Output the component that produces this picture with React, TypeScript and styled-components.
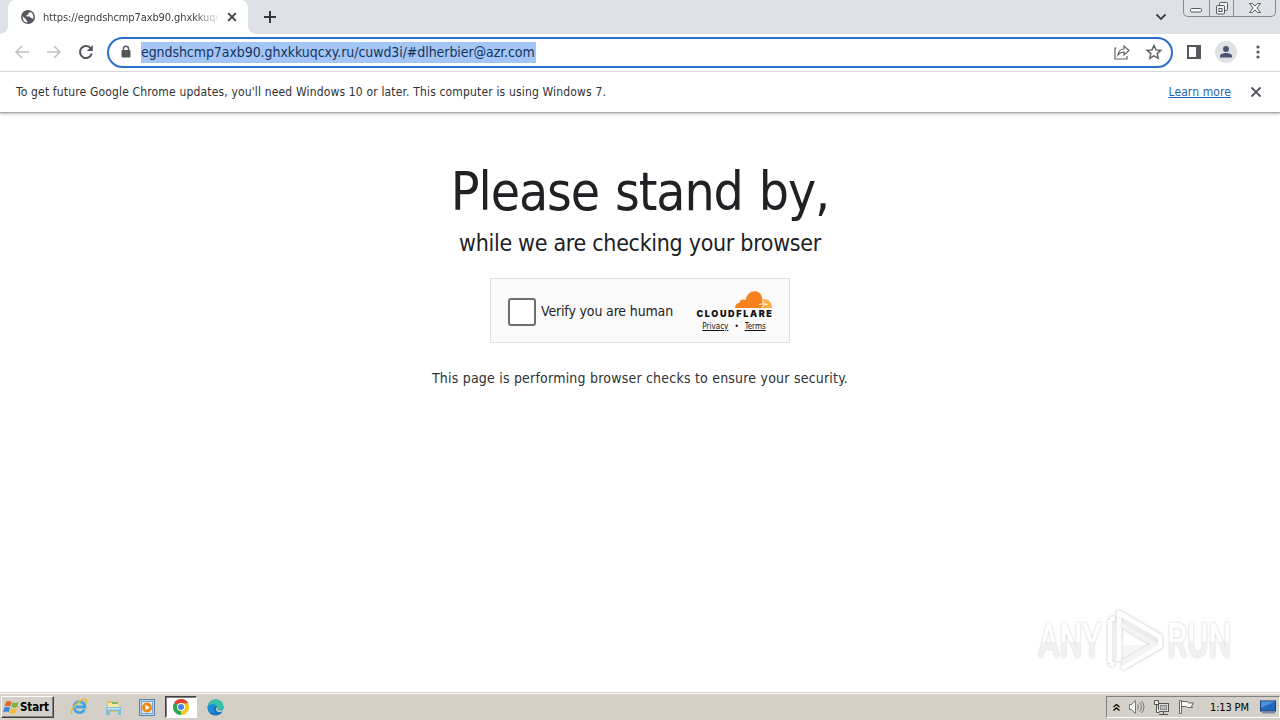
import React from 'react';
import styled, { createGlobalStyle } from 'styled-components';

const Global = createGlobalStyle`
  * { box-sizing: border-box; }
  body { margin: 0; background: #fff; }
  svg { display: block; flex: none; }
`;

const Screen = styled.div`
  width: 1280px;
  height: 720px;
  overflow: hidden;
  display: flex;
  flex-direction: column;
  background: #fff;
  color: #202124;
  font-family: 'DejaVu Sans Condensed', 'DejaVu Sans', sans-serif;
  font-stretch: condensed;
`;

const Label = styled.span<{ $size: number; $spacing?: number; $color?: string }>`
  font-size: ${p => p.$size}px;
  letter-spacing: ${p => p.$spacing ?? 0}px;
  color: ${p => p.$color ?? '#303134'};
  white-space: nowrap;
`;

const TabStrip = styled.div`
  height: 34px;
  flex: none;
  display: flex;
  background: #dee1e6;
  padding-left: 8px;
`;

const Tab = styled.div`
  position: relative;
  width: 240px;
  height: 34px;
  display: flex;
  align-items: center;
  padding: 0 10px 0 13px;
  background: #fff;
  border-radius: 8px 8px 0 0;
  &::before, &::after {
    content: '';
    position: absolute;
    bottom: 0;
    width: 8px;
    height: 8px;
  }
  &::before { left: -8px; background: radial-gradient(circle at 0 0, #dee1e6 7.5px, #fff 8px); }
  &::after { right: -8px; background: radial-gradient(circle at 100% 0, #dee1e6 7.5px, #fff 8px); }
`;

const TabTitle = styled.div`
  width: 176px;
  margin: 2px 8px 0 8px;
  overflow: hidden;
  line-height: 16px;
  display: flex;
  mask-image: linear-gradient(90deg, #000 150px, transparent 178px);
`;

const NewTab = styled.div`
  margin: 10px 0 0 15px;
`;

const StripEnd = styled.div`
  margin-left: auto;
  display: flex;
  padding-right: 4px;
`;

const TabSearch = styled.div`
  padding: 12px 16px 0 0;
`;

const WindowButtons = styled.div`
  display: flex;
  width: 93px;
  height: 17px;
  border: 1px solid #878a90;
  border-top: 0;
  border-radius: 0 0 5px 5px;
  background: #dee1e6;
`;

const WindowButton = styled.div<{ $width: number }>`
  width: ${p => p.$width}px;
  display: flex;
  justify-content: center;
  & + & { border-left: 1px solid #878a90; }
`;

const Toolbar = styled.div`
  height: 38px;
  flex: none;
  display: flex;
  align-items: center;
  padding: 0 12px 1px 12px;
  border-bottom: 1px solid #dcdde0;
`;

const NavButtons = styled.div`
  display: flex;
  gap: 12px;
  width: 95px;
`;

const AddressBar = styled.div`
  width: 1066px;
  height: 31px;
  display: flex;
  align-items: center;
  border: 2px solid #2a6fce;
  border-radius: 16px;
  padding: 0 8px 0 11px;
`;

const Selection = styled.div`
  display: flex;
  align-items: center;
  height: 21px;
  margin-left: 9px;
  width: 395px;
  background: #a3c6f5;
`;

const BarActions = styled.div`
  margin-left: auto;
  display: flex;
  gap: 14px;
`;

const ToolbarActions = styled.div`
  display: flex;
  align-items: center;
  margin-left: 11px;
  gap: 11px;
`;

const InfoBar = styled.div`
  height: 41px;
  flex: none;
  display: flex;
  align-items: center;
  padding: 0 17px 0 16px;
  border-bottom: 1px solid #aaa;
  box-shadow: 0 1px 3px #bbb;
`;

const LearnMore = styled.a`
  margin: 0 18px 0 auto;
  color: #2463ba;
  text-decoration: underline;
  font-size: 12px;
  letter-spacing: 0.1px;
`;

const Page = styled.main`
  position: relative;
  flex: 1;
  display: flex;
  flex-direction: column;
  align-items: center;
  padding-top: 45px;
`;

const Heading = styled.h1`
  margin: 0;
  font-size: 53px;
  font-weight: 400;
  line-height: 68px;
  letter-spacing: -1.1px;
  word-spacing: 2px;
  white-space: nowrap;
`;

const Subheading = styled.h2`
  margin: 0;
  font-size: 23px;
  font-weight: 400;
  line-height: 35px;
  letter-spacing: -0.3px;
  white-space: nowrap;
`;

const Challenge = styled.div`
  width: 300px;
  height: 65px;
  margin: 17px 0 27px;
  border: 1px solid #e0e0e0;
  background: #fafafa;
  display: flex;
  align-items: center;
  padding: 0 16px 0 17px;
`;

const Checkbox = styled.div`
  width: 28px;
  height: 28px;
  border: 2px solid #6d6d6d;
  border-radius: 3px;
  background: #fff;
  margin: 2px 5px 0 0;
`;

const Brand = styled.div`
  margin-left: auto;
  width: 78px;
  padding-top: 2px;
  display: flex;
  flex-direction: column;
  align-items: center;
`;

const CloudRow = styled.div`
  align-self: flex-end;
  padding-right: 1px;
`;

const Wordmark = styled.div`
  font-family: Inter, sans-serif;
  font-stretch: normal;
  font-weight: 900;
  font-size: 9px;
  line-height: 10px;
  letter-spacing: 1.65px;
  margin-right: -2px;
  color: #111;
`;

const Terms = styled.div`
  display: flex;
  gap: 6px;
  align-items: center;
  margin-top: 2px;
  line-height: 11px;
  font-size: 8px;
  color: #111;
  u { text-underline-offset: 1px; }
`;

const Watermark = styled.div`
  position: absolute;
  left: 1038px;
  top: 495px;
  display: flex;
  align-items: center;
  gap: 3px;
`;

const WordSlot = styled.div`
  width: 65px;
  display: flex;
`;

const WatermarkWord = styled.span`
  flex: none;
  font-family: Roboto, sans-serif;
  font-stretch: normal;
  font-size: 49px;
  font-weight: 500;
  line-height: 64px;
  white-space: nowrap;
  color: transparent;
  background: linear-gradient(#fff 50%, #f1f1f1 52%);
  background-clip: text;
  filter: drop-shadow(0 0 1.5px #ccc);
  transform: scaleX(0.66);
  transform-origin: 0 50%;
`;

const Taskbar = styled.footer`
  height: 28px;
  flex: none;
  display: flex;
  align-items: center;
  background: #d4d0c8;
  border-top: 1px solid #d4d0c8;
  box-shadow: inset 0 1px #fff;
  padding: 1px 0 0 1px;
`;

const StartButton = styled.div`
  width: 53px;
  height: 22px;
  display: flex;
  align-items: center;
  gap: 0;
  padding-left: 1px;
  border: 1px solid;
  border-color: #fff #404040 #404040 #fff;
  box-shadow: inset -1px -1px #808080;
  font-size: 11.5px;
  font-weight: 700;
  letter-spacing: -0.1px;
  color: #000;
`;

const Launchers = styled.div`
  display: flex;
  margin-left: 9px;
`;

const Launcher = styled.div<{ $active?: boolean }>`
  width: 32px;
  height: 22px;
  margin-right: 2px;
  display: flex;
  align-items: center;
  justify-content: center;
  ${p => p.$active && `
    background: #fff;
    border: 1px solid;
    border-color: #404040 #fff #fff #404040;
    box-shadow: inset 1px 1px #808080;
  `}
`;

const Tray = styled.div`
  margin-left: auto;
  width: 174px;
  height: 22px;
  display: flex;
  align-items: center;
  padding-left: 6px;
  border: 1px solid;
  border-color: #808080 #fff #fff #808080;
`;

const TrayIcons = styled.div`
  display: flex;
  align-items: center;
  gap: 8px;
  width: 97px;
`;

const ShowDesktop = styled.div`
  margin-left: auto;
  padding-right: 3px;
`;

const Stroke = ({ d, size = 16, color = '#5f6368', width = 1.8 }: { d: string; size?: number; color?: string; width?: number }) => (
  <svg width={size} height={size} viewBox={`0 0 ${size} ${size}`} fill="none" stroke={color} strokeWidth={width}>
    <path d={d} />
  </svg>
);

const GlobeIcon = () => (
  <svg width="14" height="14" viewBox="0 0 14 14">
    <circle cx="7" cy="7" r="7" fill="#54585d" />
    <path d="M1.6 6.2 5 9.2v1l1.4 1.2v1.2C3.4 12.5 1.3 9.6 1.6 6.2ZM8.6 1.7c.2 1-.2 1.6-1.3 1.8l-.2 1.2-1.5.4v1.3h3.2l1 1.6h1.3l1 1.2c1.1-3-.2-6.5-3.500-7.500Z" fill="#fff" />
  </svg>
);

const ReloadIcon = () => (
  <svg width="20" height="20" viewBox="0 0 20 20">
    <path d="M14.900 6.500A6 6 0 1 0 15.800 11.600" fill="none" stroke="#54585d" strokeWidth="2" />
    <path d="M16.800 3v6h-6Z" fill="#54585d" />
  </svg>
);

const LockIcon = () => (
  <svg width="12" height="14" viewBox="0 0 12 14">
    <rect x="1.500" y="5" width="9" height="7.500" rx="1" fill="#54585d" />
    <path d="M3.500 5.500V3.800a2.500 2.500 0 0 1 5 0v1.700" fill="none" stroke="#54585d" strokeWidth="1.400" />
  </svg>
);

const CloudLogo = () => (
  <svg width="37" height="18" viewBox="0 0 37 18">
    <path d="M25 17 28 8.500C33 7.500 36.500 11 37 17Z" fill="#fbad41" />
    <path d="M0 17c0-3 1.500-5 4.500-5 0-3 3-4.500 6-3C12 3 15.500 0 20 .2c4 .2 6.500 3 7.300 6.800.9 3.500.4 7-1.300 10Z" fill="#f6821f" />
    <path d="M24 13.500l4-.8M27.500 9.500l1 3 4 .8-4 .6-1 2.600" fill="none" stroke="#fff3df" strokeWidth="1" />
  </svg>
);

const PlayMark = () => (
  <svg width="58" height="66" viewBox="0 0 58 66" fill="none">
    <g filter="drop-shadow(0 0 1.5px #bbb)" stroke="#fff" strokeWidth="5" strokeLinejoin="round">
      <path d="M4 12v43M4 12l5-2M4 55l4 2" />
      <path d="M13 53V5l41 24v9L16 60" />
      <path d="M14 16 49 36 16 55" stroke="#f4f4f4" />
    </g>
    <path d="M17 37h25L17 51Z" fill="#eee" opacity=".5" />
  </svg>
);

const StartFlag = () => (
  <svg width="17" height="16" viewBox="0 0 17 16">
    <path d="M3 3q3-2 5.500-.2L7.300 7.600Q4.500 6 1.600 7.700Z" fill="#e8632b" />
    <path d="M9.400 3.200q3 1.500 6.200-.1l-1.500 5q-3 1.300-5.900-.1Z" fill="#7bb642" />
    <path d="M1.300 8.800q3-1.900 5.700-.2l-1.300 4.700q-2.700-1.500-5.600.1Z" fill="#3b86cf" />
    <path d="M8 9.200q3 1.500 5.900.1l-1.400 4.800q-3 1.500-5.800 0Z" fill="#f5bd35" />
  </svg>
);

const ExplorerIcon = () => (
  <svg width="18" height="18" viewBox="0 0 18 18" fill="none">
    <path d="M14.500 11.500A5.500 5.500 0 1 1 15 9H6" stroke="#43a5df" strokeWidth="2.800" />
    <path d="M2 16C-1 13 6 5 12 2c4-2 5.500 0 4 3" stroke="#e9b936" strokeWidth="1.400" />
  </svg>
);

const FolderIcon = () => (
  <svg width="17" height="17" viewBox="0 0 17 17">
    <path d="M2 2h5l1 1.500h6V13H2Z" fill="#e3bf59" />
    <path d="M3 4h11v6H3Z" fill="#f7e9a3" />
    <path d="M7 3h6v2H7Z" fill="#79b765" />
    <path d="M1 8h15v8h-3v-4H5v4H1Z" fill="#83bfdc" />
    <path d="M2 9h13v1.500H2Z" fill="#c0e2ed" />
  </svg>
);

const MediaIcon = () => (
  <svg width="17" height="17" viewBox="0 0 17 17">
    <rect x=".5" y=".5" width="15" height="16" fill="#b9d5ec" stroke="#5682b4" />
    <rect x="2.500" y="2.500" width="11" height="12" fill="#dbe9f3" stroke="#7fa6cb" />
    <circle cx="8" cy="8.500" r="5" fill="#f18a1d" />
    <path d="M6.500 5.700v5.600l4.300-2.800Z" fill="#fff" />
  </svg>
);

const ChromeIcon = () => (
  <svg width="16" height="16" viewBox="0 0 16 16">
    <path d="M8 8 1.070 4A8 8 0 0 1 14.930 4Z" fill="#e04435" />
    <path d="M8 8 14.930 4A8 8 0 0 1 8 16Z" fill="#fac61c" />
    <path d="M8 8v8A8 8 0 0 1 1.070 4Z" fill="#31a350" />
    <path d="M8 4.200h7L11.300 10 8 16 8 8Z" fill="#fac61c" />
    <path d="M8 4.200h7L14.900 4A8 8 0 0 0 8 0Z" fill="#e04435" />
    <circle cx="8" cy="8" r="4" fill="#fff" />
    <circle cx="8" cy="8" r="3" fill="#4285e8" />
  </svg>
);

const EdgeIcon = () => (
  <svg width="17" height="17" viewBox="0 0 17 17">
    <circle cx="8.500" cy="8.500" r="8" fill="#1672bf" />
    <path d="M.7 7.500C1.500 3 5 .5 9 .5c4.500 0 7.500 3 7.500 6.500 0 3-2 4.500-4.500 4.500-1.500 0-2.500-.7-1.500-2C11 6 5 3.500.7 7.500Z" fill="#39c2a5" />
    <path d="M.7 7.500C3 4.500 8 4.500 9.500 7 6 7 5.500 11 8 13.500 4 15 0 12 .7 7.500Z" fill="#1b8fd6" />
    <path d="M10 8c-2 2-1 4.500 2 5 1.500.2 3-.4 4.500-1.500V10c-1 1.500-3 1.700-4.500 1.500-1.500-.3-2.300-.8-1.500-2Z" fill="#d4d0c8" />
  </svg>
);

const VolumeIcon = () => (
  <svg width="17" height="16" viewBox="0 0 17 16" fill="none" stroke="#777">
    <path d="M1.500 5.500h2l4-4v13l-4-4h-2Z" fill="#f5f5f2" />
    <path d="M9.500 5.500q2 2.500 0 5M11.500 3.500q4 4.500 0 9M13.500 2q5 6 0 12" />
  </svg>
);

const NetworkIcon = () => (
  <svg width="17" height="17" viewBox="0 0 17 17" fill="none" stroke="#555">
    <rect x="5.500" y="4.500" width="10" height="8" fill="#deded9" />
    <rect x="7.500" y="6.500" width="6" height="4" fill="#bbb" stroke="#888" />
    <path d="M6 15.500h9M10.500 12.500v3M1.500 1.500h4v4h-4ZM3.500 5.500v8h3" fill="#eee" />
  </svg>
);

const FlagIcon = () => (
  <svg width="17" height="16" viewBox="0 0 17 16" fill="#f8f8f5" stroke="#666">
    <path d="M1.500 1.500h2v13h-2ZM3.500 2.500h6l1 1.500h5l-2 3 1 1.500h-5l-1-1h-5Z" />
  </svg>
);

const DesktopIcon = () => (
  <svg width="16" height="16" viewBox="0 0 16 16">
    <rect x=".5" y="2" width="15" height="10" fill="#2469bb" stroke="#173f79" />
    <path d="M1 2.500h14L1 9Z" fill="#4c91d9" />
    <path d="M2 13h13v1.500H2Z" fill="#7b8ea6" />
  </svg>
);

export default function App() {
  return (
    <Screen>
      <Global />
      <TabStrip>
        <Tab>
          <GlobeIcon />
          <TabTitle><Label $size={11} $spacing={-0.1} $color="#3c4043">https://egndshcmp7axb90.ghxkkuqc</Label></TabTitle>
          <Stroke size={10} d="m1.200 1.200 7.600 7.600m0-7.600-7.600 7.600" color="#3c4043" />
        </Tab>
        <NewTab><Stroke size={14} d="M7 1v12M1 7h12" color="#35383c" width={2} /></NewTab>
        <StripEnd>
          <TabSearch><Stroke size={12} d="M1.500 2.500 6 7l4.500-4.500" color="#3c4043" /></TabSearch>
          <WindowButtons>
            <WindowButton $width={25}>
              <svg width="14" height="16" viewBox="0 0 14 16"><rect x="1.500" y="8.500" width="11" height="3.500" rx="1.200" fill="#f8f8f8" stroke="#55585e" /></svg>
            </WindowButton>
            <WindowButton $width={25}>
              <svg width="14" height="16" viewBox="0 0 14 16" fill="#f2f3f5" stroke="#55585e">
                <rect x="4.500" y="2.500" width="8" height="8" rx="1" /><rect x="1.500" y="5.500" width="8" height="8.500" rx="1" /><rect x="4" y="8.500" width="3" height="3" />
              </svg>
            </WindowButton>
            <WindowButton $width={42}>
              <svg width="14" height="16" viewBox="0 0 14 16"><path d="M1.500 3.500h3L7 6l2.500-2.500h3L9 8l3.500 4.500h-3L7 10l-2.500 2.500h-3L5 8Z" fill="#f8f8f8" stroke="#55585e" /></svg>
            </WindowButton>
          </WindowButtons>
        </StripEnd>
      </TabStrip>

      <Toolbar>
        <NavButtons>
          <Stroke size={20} width={1.6} d="M17 10H4m6-6L4 10l6 6" color="#bfc1c4" />
          <Stroke size={20} width={1.6} d="M3 10h13M10 4l6 6-6 6" color="#bfc1c4" />
          <ReloadIcon />
        </NavButtons>
        <AddressBar>
          <LockIcon />
          <Selection><Label $size={14} $spacing={-0.07} $color="#17345f">egndshcmp7axb90.ghxkkuqcxy.ru/cuwd3i/#dlherbier@azr.com</Label></Selection>
          <BarActions>
            <Stroke size={18} width={1.2} d="M3.500 5H2v11h12v-3M5 12c.5-4 3-6 6-6V3l5 4.500-5 4.500V9C8.500 9 6.500 10 5 12Z" />
            <Stroke size={18} width={1.5} d="m9 2.500 2 4.400 4.800.5-3.600 3.200 1 4.700L9 12.900l-4.200 2.400 1-4.700-3.600-3.200L7 6.900Z" />
          </BarActions>
        </AddressBar>
        <ToolbarActions>
          <svg width="20" height="20" viewBox="0 0 20 20"><path d="M3 3h14v14H3Z M5 5v10h7V5Z" fill="#54585d" fillRule="evenodd" /></svg>
          <svg width="22" height="22" viewBox="0 0 22 22">
            <circle cx="11" cy="11" r="11" fill="#dfe1e5" /><circle cx="11" cy="8" r="3" fill="#4b5570" /><path d="M5 16.500v-1.500c0-2 3-3 6-3s6 1 6 3v1.500Z" fill="#4b5570" />
          </svg>
          <svg width="20" height="20" viewBox="0 0 20 20" fill="#54585d"><circle cx="10" cy="5" r="1.600" /><circle cx="10" cy="10" r="1.600" /><circle cx="10" cy="15" r="1.600" /></svg>
        </ToolbarActions>
      </Toolbar>

      <InfoBar>
        <Label $size={12} $spacing={0.16}>To get future Google Chrome updates, you'll need Windows 10 or later. This computer is using Windows 7.</Label>
        <LearnMore>Learn more</LearnMore>
        <Stroke size={14} d="m2.500 2.500 9 9m0-9-9 9" color="#54585d" />
      </InfoBar>

      <Page>
        <Heading>Please stand by,</Heading>
        <Subheading>while we are checking your browser</Subheading>
        <Challenge>
          <Checkbox />
          <Label $size={14} $spacing={-0.15} $color="#232323">Verify you are human</Label>
          <Brand>
            <CloudRow><CloudLogo /></CloudRow>
            <Wordmark>CLOUDFLARE</Wordmark>
            <Terms><u>Privacy</u><span>•</span><u>Terms</u></Terms>
          </Brand>
        </Challenge>
        <Label $size={14} $spacing={0.21}>This page is performing browser checks to ensure your security.</Label>
        <Watermark>
          <WordSlot><WatermarkWord>ANY</WatermarkWord></WordSlot>
          <PlayMark />
          <WordSlot><WatermarkWord>RUN</WatermarkWord></WordSlot>
        </Watermark>
      </Page>

      <Taskbar>
        <StartButton><StartFlag />Start</StartButton>
        <Launchers>
          <Launcher><ExplorerIcon /></Launcher>
          <Launcher><FolderIcon /></Launcher>
          <Launcher><MediaIcon /></Launcher>
          <Launcher $active><ChromeIcon /></Launcher>
          <Launcher><EdgeIcon /></Launcher>
        </Launchers>
        <Tray>
          <TrayIcons>
            <Stroke size={7} width={1.4} color="#111" d="M.5 3 3.500.5l3 2.500M.5 6.500l3-2.500 3 2.500" />
            <VolumeIcon /><NetworkIcon /><FlagIcon />
          </TrayIcons>
          <Label $size={11} $spacing={-0.15} $color="#000">1:13 PM</Label>
          <ShowDesktop><DesktopIcon /></ShowDesktop>
        </Tray>
      </Taskbar>
    </Screen>
  );
}
